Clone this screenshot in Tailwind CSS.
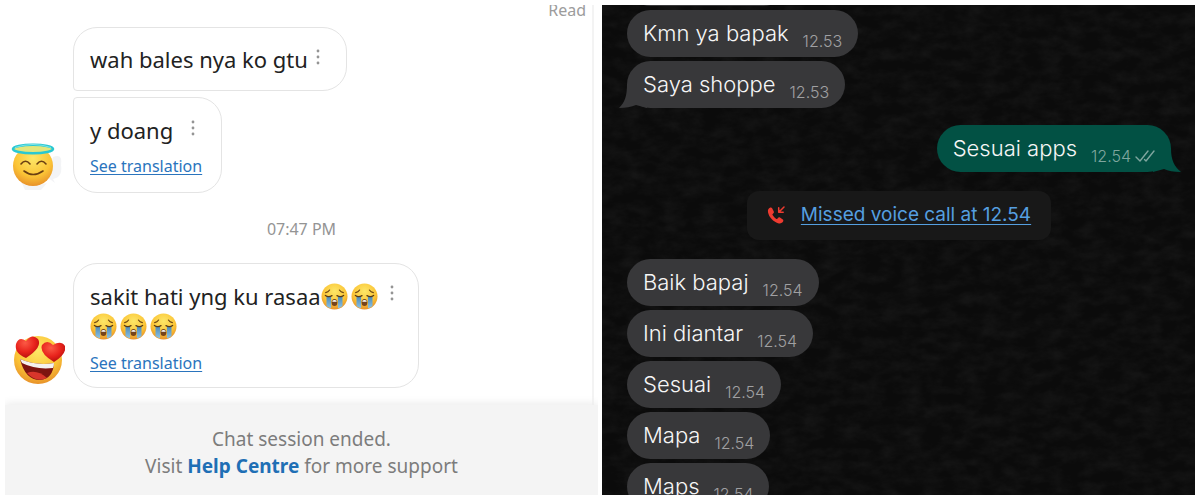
<!DOCTYPE html>
<html lang="id">
<head>
    <meta charset="UTF-8">
    <meta name="viewport" content="width=device-width, initial-scale=1.0">
    <title>Chat</title>
    <script src="https://cdn.jsdelivr.net/npm/@tailwindcss/browser@4"></script>
</head>
<body class="bg-white">

<svg class="absolute h-0 w-0" aria-hidden="true">
    <defs>
        <radialGradient id="face" cx="50%" cy="30%" r="70%">
            <stop offset="0" stop-color="#fde768"/>
            <stop offset="0.65" stop-color="#fbc436"/>
            <stop offset="1" stop-color="#e8922a"/>
        </radialGradient>
        <linearGradient id="tear" x1="0" y1="0" x2="0" y2="1">
            <stop offset="0" stop-color="#4c87b4"/>
            <stop offset="1" stop-color="#8cc4e6"/>
        </linearGradient>
        <radialGradient id="heart" cx="40%" cy="30%" r="70%">
            <stop offset="0" stop-color="#fb5a45"/>
            <stop offset="0.6" stop-color="#e8231c"/>
            <stop offset="1" stop-color="#b9100f"/>
        </radialGradient>
        <symbol id="cry" viewBox="0 0 27 27">
            <circle cx="13.5" cy="13.5" r="13" fill="url(#face)"/>
            <path d="M5.5 13.5h4.6v11.8a13 13 0 0 1-4.6-2.4zM16.9 13.5h4.6v9.4a13 13 0 0 1-4.6 2.4z" fill="url(#tear)"/>
            <path d="M4.6 9.6q2.6-.4 4-2.6M22.4 9.6q-2.6-.4-4-2.6" fill="none" stroke="#6b4413" stroke-width="1.1" stroke-linecap="round"/>
            <path d="M4.4 12.4q3 2.2 6.6.2M22.6 12.4q-3 2.2-6.6.2" fill="none" stroke="#5a3a14" stroke-width="1.3" stroke-linecap="round"/>
            <ellipse cx="13.5" cy="19.6" rx="2.9" ry="3.5" fill="#76431b"/>
            <path d="M11.4 17.8q2.1-1.4 4.2 0v.9h-4.2z" fill="#fff"/>
        </symbol>
        <symbol id="dots" viewBox="0 0 4 16">
            <circle cx="2" cy="2" r="1.4" fill="#949494"/>
            <circle cx="2" cy="8" r="1.4" fill="#949494"/>
            <circle cx="2" cy="14" r="1.4" fill="#949494"/>
        </symbol>
    </defs>
</svg>

<main class="grid h-screen grid-cols-2 gap-1 overflow-hidden p-[5px]">

    <!-- support chat -->
    <section class="flex min-w-0 flex-col overflow-hidden font-['Noto_Sans',sans-serif]">
        <div class="mr-1 flex min-h-0 flex-1 flex-col overflow-hidden border-r-2 border-[#f3f3f3]">
            <p class="-mt-1.5 pr-1.5 text-right text-base leading-[22px] text-[#9c9c9c]">Read</p>

            <div class="mt-1.5 flex flex-col items-start gap-1.5 pl-17">
                <div class="flex h-16 items-center gap-2 rounded-3xl rounded-bl-sm border border-[#e4e4e4] pr-[26px] pl-4">
                    <p class="text-[22px] leading-8 whitespace-nowrap text-[#222]">wah bales nya ko gtu</p>
                    <button type="button" aria-label="Menu" class="-mt-1"><svg class="h-4 w-1"><use href="#dots"/></svg></button>
                </div>
            </div>

            <div class="mt-1.5 flex items-end gap-2 pl-1">
                <svg class="h-14 w-14" viewBox="0 0 56 56" role="img" aria-label="Angel">
                    <path d="M44 20q10-4 8 8 2 12-8 14l2 4-8-6zM12 44q8 8 26 2l-6 7H16z" fill="#f3f4f6"/>
                    <circle cx="24" cy="29" r="20" fill="url(#face)"/>
                    <ellipse cx="24" cy="12" rx="20" ry="4.200" fill="#e3e67c" stroke="#29c8d2" stroke-width="2.600"/>
                    <path d="M6 10.500q18-6 36 0" fill="none" stroke="#7fe6ea" stroke-width="1"/>
                    <path d="M12 27q4.500-5.500 9 0M28 27q4.500-5.500 9 0M15 34q9 7 19 0" fill="none" stroke="#6a3f12" stroke-width="1.600" stroke-linecap="round"/>
                </svg>
                <div class="h-24 rounded-3xl rounded-tl-sm border border-[#e4e4e4] pt-4 pr-4 pl-4">
                    <div class="flex items-center gap-[18px] pr-2.5">
                        <p class="text-[22px] leading-8 whitespace-nowrap text-[#222]">y doang</p>
                        <button type="button" aria-label="Menu" class="-mt-1"><svg class="h-4 w-1"><use href="#dots"/></svg></button>
                    </div>
                    <a href="#" class="mt-2 block text-base leading-6 whitespace-nowrap text-[#2a74bd] underline underline-offset-2">See translation</a>
                </div>
            </div>

            <p class="mt-6 pl-1.5 text-center text-base leading-6 text-[#949494]">07:47 PM</p>

            <div class="mt-[22px] flex items-end gap-2 pl-1">
                <svg class="h-14 w-14" viewBox="0 0 56 56" role="img" aria-label="Heart eyes">
                    <circle cx="29" cy="28" r="24" fill="url(#face)"/>
                    <path d="M11 27q16 7 34 4-1 16-14 17-15 0-20-21z" fill="#7d1410"/>
                    <path d="M11 27q16 7 34 4 0 3-1 5-17 2-31-5z" fill="#f4f1ee"/>
                    <path d="M18 41q10-4 20 5-11 5-20-5z" fill="#d8352b"/>
                    <path d="M17 26Q5 21 7 12q3-8 10-3 6-8 12-2 5 8-12 19z" fill="url(#heart)"/>
                    <path d="M45 30Q30 21 33 13q5-6 11 0 8-5 12 1 2 8-11 16z" fill="url(#heart)"/>
                </svg>
                <div class="rounded-3xl border border-[#e4e4e4] pt-[17px] pr-6 pb-3 pl-4">
                    <div class="flex items-start gap-3">
                        <p class="text-[22px] leading-[30px] whitespace-nowrap text-[#222]">sakit hati yng ku rasaa<span class="inline-flex h-[27px] gap-[3px] align-[-5px]" role="img" aria-label="Menangis"><svg class="size-[27px]"><use href="#cry"/></svg><svg class="size-[27px]"><use href="#cry"/></svg></span><br><span class="flex h-[30px] items-center gap-[3px]" role="img" aria-label="Menangis"><svg class="size-[27px]"><use href="#cry"/></svg><svg class="size-[27px]"><use href="#cry"/></svg><svg class="size-[27px]"><use href="#cry"/></svg></span></p>
                        <button type="button" aria-label="Menu" class="mt-1"><svg class="h-4 w-1"><use href="#dots"/></svg></button>
                    </div>
                    <a href="#" class="mt-2.5 block text-base leading-6 whitespace-nowrap text-[#2a74bd] underline underline-offset-2">See translation</a>
                </div>
            </div>
        </div>

        <footer class="bg-[#f4f4f4] pt-[21px] pb-[15px] text-center text-[19px] leading-[27px] text-[#7c7c7c] shadow-[0_-2px_8px_#ececec]">
            <p>Chat session ended.</p>
            <p>Visit <a href="#" class="font-bold text-[#1f6fb5]">Help Centre</a> for more support</p>
        </footer>
    </section>

    <!-- driver chat -->
    <section class="relative min-w-0 overflow-hidden bg-[#0b0b0b] font-[Inter,sans-serif] text-[#f6f6f6]">
        <svg class="absolute inset-0 h-full w-full opacity-15" aria-hidden="true">
            <filter id="paper" x="0" y="0" width="100%" height="100%">
                <feTurbulence type="fractalNoise" baseFrequency="0.05 0.09" numOctaves="5" seed="4"/>
                <feColorMatrix values="0 0 0 0 0.3  0 0 0 0 0.3  0 0 0 0 0.3  0.9 0 0 0 -0.3"/>
            </filter>
            <rect width="100%" height="100%" filter="url(#paper)"/>
        </svg>

        <div class="relative flex flex-col items-start gap-1 pr-6 pl-[25px] text-[22px] leading-7 font-light whitespace-nowrap">
            <div class="-mt-[46px] h-[47px] w-40 rounded-3xl bg-[#38383a]"></div>
            <div class="flex h-[47px] items-center gap-3.5 rounded-3xl bg-[#38383a] px-4 pb-0.5">
                <p>Kmn ya bapak</p>
                <time class="pt-4 text-base leading-5 text-[#a0a0a2]">12.53</time>
            </div>
            <div class="relative flex h-[47px] items-center gap-3.5 rounded-3xl bg-[#38383a] px-4 pb-0.5">
                <svg class="absolute bottom-0 -left-2 h-6 w-7" viewBox="0 0 28 24" aria-hidden="true"><path d="M8 0C8 12 6 18 0 24Q10 24 17 21L28 24V0z" fill="#38383a"/></svg>
                <p class="relative">Saya shoppe</p>
                <time class="pt-4 text-base leading-5 text-[#a0a0a2]">12.53</time>
            </div>

            <div class="relative mt-[13px] flex h-[47px] items-center gap-3.5 self-end rounded-3xl bg-[#025144] px-4 pb-0.5">
                <svg class="absolute -right-2.5 bottom-0 h-6 w-7" viewBox="0 0 28 24" aria-hidden="true"><path d="M18 0c0 12 3 18 10 24q-11 0-17-3L0 24V0z" fill="#025144"/></svg>
                <p>Sesuai apps</p>
                <div class="relative flex items-center gap-1 pt-4 text-base leading-5 text-[#7fa69f]">
                    <time>12.54</time>
                    <svg class="h-3 w-5" viewBox="0 0 20 12" fill="none" stroke="currentColor" stroke-width="1.4" stroke-linecap="round" stroke-linejoin="round" role="img" aria-label="Terkirim"><path d="M1 7l4 4 8-10M9.500 9.500L11 11l8-10"/></svg>
                </div>
            </div>

            <div class="mt-[15px] flex h-[49px] items-center gap-4 self-center rounded-xl bg-[#181818] px-5 pb-0.5">
                <svg class="h-[18px] w-[18px]" viewBox="0 0 18 18" aria-hidden="true">
                    <path d="M3.300 1.600C1.500 2.400.600 4 1 6.300c.900 5 5.500 9.600 10 10.900 2.400.600 4.300 0 5.200-1.900.3-.7.1-1.300-.4-1.700l-2.800-2c-.6-.4-1.200-.4-1.700.1l-1 1c-.4.4-.8.4-1.200.1-1.400-1-2.700-2.300-3.500-3.700-.3-.5-.3-.8.1-1.200l.9-1c.5-.5.5-1.100.1-1.700L5 2.100c-.4-.6-1-.8-1.700-.5z" fill="#ee3b30"/>
                    <path d="M17 1l-5 5M11.700 1.800v4.500h4.500" fill="none" stroke="#ee3b30" stroke-width="1.500" stroke-linecap="round" stroke-linejoin="round"/>
                </svg>
                <a href="#" class="text-[19px] leading-6 font-normal text-[#559fe0] underline underline-offset-3">Missed voice call at 12.54</a>
            </div>

            <div class="mt-[15px] flex h-[47px] items-center gap-3.5 rounded-3xl bg-[#38383a] px-4 pb-0.5">
                <p>Baik bapaj</p>
                <time class="pt-4 text-base leading-5 text-[#a0a0a2]">12.54</time>
            </div>
            <div class="flex h-[47px] items-center gap-3.5 rounded-3xl bg-[#38383a] px-4 pb-0.5">
                <p>Ini diantar</p>
                <time class="pt-4 text-base leading-5 text-[#a0a0a2]">12.54</time>
            </div>
            <div class="flex h-[47px] items-center gap-3.5 rounded-3xl bg-[#38383a] px-4 pb-0.5">
                <p>Sesuai</p>
                <time class="pt-4 text-base leading-5 text-[#a0a0a2]">12.54</time>
            </div>
            <div class="flex h-[47px] items-center gap-3.5 rounded-3xl bg-[#38383a] px-4 pb-0.5">
                <p>Mapa</p>
                <time class="pt-4 text-base leading-5 text-[#a0a0a2]">12.54</time>
            </div>
            <div class="flex h-[47px] items-center gap-3.5 rounded-3xl bg-[#38383a] px-4 pb-0.5">
                <p>Maps</p>
                <time class="pt-4 text-base leading-5 text-[#a0a0a2]">12.54</time>
            </div>
        </div>
    </section>

</main>
</body>
</html>
